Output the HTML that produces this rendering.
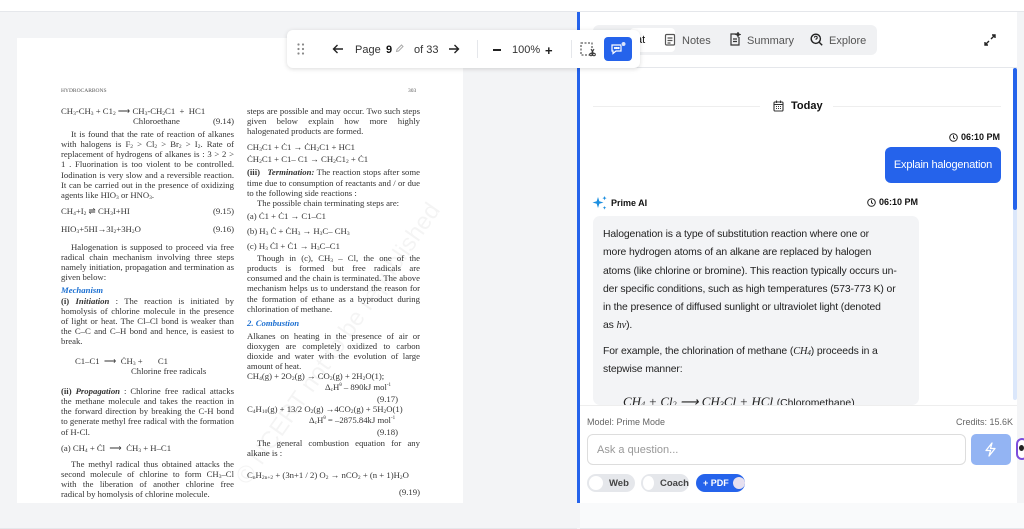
<!DOCTYPE html>
<html><head><meta charset="utf-8"><style>
*{box-sizing:border-box;margin:0;padding:0}
body{width:1024px;height:529px;overflow:hidden;background:#f3f4f6;font-family:"Liberation Sans",sans-serif;position:relative}
.abs{position:absolute}
.pdf{font-family:"Liberation Serif",serif;font-size:8.7px;line-height:10.1px;color:#333;text-align:justify}
.pdf p{margin:0}
.ind{text-indent:10px}
.eq{display:flex;justify-content:space-between}
.bl{color:#1b6fd1;font-weight:bold;font-style:italic}
sub{font-size:5.5px;vertical-align:-1px;line-height:0}
.chip{position:absolute;top:474px;height:18px;border-radius:9px;background:#e5e7eb;font-size:9.5px;color:#444;font-weight:bold;display:flex;align-items:center;white-space:nowrap}
.chip i{display:inline-block;width:14px;height:14px;border-radius:50%;background:#fff;margin:0 6px 0 2px}
</style></head><body>
<div class="abs" style="left:0;top:0;width:1024px;height:12px;background:#fff;border-bottom:1px solid #e5e7eb"></div>
<div class="abs" style="left:17px;top:38px;width:446px;height:465px;background:#fff"></div>
<div class="abs" style="left:0;top:503px;width:577px;height:26px;background:#f3f4f6;border-bottom:1px solid #e5e7eb"></div>
<div class="abs pdf" style="left:61px;top:86px;font-size:5.5px;color:#555">HYDROCARBONS</div>
<div class="abs pdf" style="left:408px;top:86px;font-size:5.5px;color:#555">303</div>
<div class="abs pdf" style="left:61px;top:106px;width:173px">
<div class="eq"><span>CH<sub>3</sub>-CH<sub>3</sub> + C1<sub>2</sub> ⟶ CH<sub>3</sub>-CH<sub>2</sub>C1 &nbsp;+ &nbsp;HC1</span></div>
<div class="eq"><span style="padding-left:72px">Chloroethane</span><span>(9.14)</span></div>
<p class="ind" style="margin-top:3px">It is found that the rate of reaction of alkanes with halogens is F<sub>2</sub> &gt; Cl<sub>2</sub> &gt; Br<sub>2</sub> &gt; I<sub>2</sub>. Rate of replacement of hydrogens of alkanes is : 3 &gt; 2 &gt; 1 . Fluorination is too violent to be controlled. Iodination is very slow and a reversible reaction. It can be carried out in the presence of oxidizing agents like HIO<sub>3</sub> or HNO<sub>3</sub>.</p>
<div class="eq" style="margin-top:6px"><span>CH<sub>4</sub>+I<sub>2</sub> ⇌ CH<sub>3</sub>I+HI</span><span>(9.15)</span></div>
<div class="eq" style="margin-top:8px"><span>HIO<sub>3</sub>+5HI→3I<sub>2</sub>+3H<sub>2</sub>O</span><span>(9.16)</span></div>
<p class="ind" style="margin-top:8px">Halogenation is supposed to proceed via free radical chain mechanism involving three steps namely initiation, propagation and termination as given below:</p>
<p class="bl" style="margin-top:3px">Mechanism</p>
<p><b>(i) <i>Initiation</i></b> : The reaction is initiated by homolysis of chlorine molecule in the presence of light or heat. The Cl–Cl bond is weaker than the C–C and C–H bond and hence, is easiest to break.</p>
<p style="margin-top:10px;padding-left:14px">C1–C1 &nbsp;⟶ &nbsp;ĊH<sub>3</sub> + &nbsp;&nbsp;&nbsp;&nbsp;&nbsp;&nbsp;C1</p>
<p style="padding-left:70px">Chlorine free radicals</p>
<p style="margin-top:10px"><b>(ii) <i>Propagation</i></b> : Chlorine free radical attacks the methane molecule and takes the reaction in the forward direction by breaking the C-H bond to generate methyl free radical with the formation of H-Cl.</p>
<p style="margin-top:6px">(a) CH<sub>4</sub> + Ċl &nbsp;⟶ &nbsp;ĊH<sub>3</sub> + H–C1</p>
<p class="ind" style="margin-top:6px">The methyl radical thus obtained attacks the second molecule of chlorine to form CH<sub>3</sub>–Cl with the liberation of another chlorine free radical by homolysis of chlorine molecule.</p>
</div>
<div class="abs pdf" style="left:247px;top:106px;width:173px">
<p>steps are possible and may occur. Two such steps given below explain how more highly halogenated products are formed.</p>
<p style="margin-top:6px">CH<sub>3</sub>C1 + Ċ1 → ĊH<sub>2</sub>C1 + HC1</p>
<p style="margin-top:2px">ĊH<sub>2</sub>C1 + C1– C1 → CH<sub>2</sub>C1<sub>2</sub> + Ċ1</p>
<p style="margin-top:3px"><b>(iii)</b> &nbsp;&nbsp;<b><i>Termination:</i></b> The reaction stops after some time due to consumption of reactants and / or due to the following side reactions :</p>
<p class="ind">The possible chain terminating steps are:</p>
<p style="margin-top:3px">(a) Ċ1 + Ċ1 → C1–C1</p>
<p style="margin-top:5px">(b) H<sub>3</sub> Ċ + ĊH<sub>3</sub> → H<sub>3</sub>C– CH<sub>3</sub></p>
<p style="margin-top:5px">(c) H<sub>3</sub> Ċl + Ċ1 → H<sub>3</sub>C–C1</p>
<p class="ind" style="margin-top:2px">Though in (c), CH<sub>3</sub> – Cl, the one of the products is formed but free radicals are consumed and the chain is terminated. The above mechanism helps us to understand the reason for the formation of ethane as a byproduct during chlorination of methane.</p>
<p class="bl" style="margin-top:4px">2. Combustion</p>
<p style="margin-top:3px">Alkanes on heating in the presence of air or dioxygen are completely oxidized to carbon dioxide and water with the evolution of large amount of heat.</p>
<p>CH<sub>4</sub>(g) + 2O<sub>2</sub>(g) → CO<sub>2</sub>(g) + 2H<sub>2</sub>O(1);</p>
<p style="padding-left:78px">Δ<sub>c</sub>H<sup style="font-size:5px">θ</sup> – 890kJ mol<sup style="font-size:5px">-1</sup></p>
<p style="text-align:right;padding-right:22px;margin-top:2px">(9.17)</p>
<p>C<sub>4</sub>H<sub>10</sub>(g) + 13/2 O<sub>2</sub>(g) →4CO<sub>2</sub>(g) + 5H<sub>2</sub>O(1)</p>
<p style="padding-left:62px">Δ<sub>c</sub>H<sup style="font-size:5px">θ</sup> = –2875.84kJ mol<sup style="font-size:5px">-1</sup></p>
<p style="text-align:right;padding-right:22px;margin-top:2px">(9.18)</p>
<p class="ind">The general combustion equation for any alkane is :</p>
<p style="margin-top:12px">C<sub>n</sub>H<sub>2n+2</sub> + (3n+1 / 2) O<sub>2</sub> → nCO<sub>2</sub> + (n + 1)H<sub>2</sub>O</p>
<p style="text-align:right;margin-top:7px">(9.19)</p>
</div>
<div class="abs" style="left:170px;top:330px;font:24px 'Liberation Sans',sans-serif;color:rgba(0,0,0,0.045);transform:rotate(-55deg);white-space:nowrap">© NCERT not to be republished</div>
<div class="abs" style="left:577px;top:12px;width:3px;height:491px;background:#2563eb"></div>
<div class="abs" style="left:580px;top:12px;width:437px;height:491px;background:#fff"></div>
<div class="abs" style="left:1017px;top:12px;width:7px;height:517px;background:#f3f4f6"></div>
<div class="abs" style="left:580px;top:503px;width:444px;height:26px;background:#f9fafb;border-bottom:1px solid #e5e7eb"></div>
<div class="abs" style="left:593px;top:25px;width:284px;height:30px;background:#f0f1f3;border-radius:6px"></div>
<div class="abs" style="left:630px;top:28px;width:45px;height:24px;background:#fff;border-radius:4px"></div>
<div class="abs" style="left:636px;top:34px;font-size:11px;color:#111">at</div>
<svg class="abs" style="left:664px;top:33px" width="12" height="13" viewBox="0 0 12 13" fill="none" stroke="#555" stroke-width="1.2"><rect x="1.5" y="1.5" width="9" height="10.5" rx="1"/><path d="M3.5 5h5M3.5 7.5h5M3.5 10h3"/></svg>
<div class="abs" style="left:682px;top:35px;font-size:11px;color:#555">Notes</div>
<svg class="abs" style="left:729px;top:32px" width="12" height="14" viewBox="0 0 12 14" fill="none" stroke="#333" stroke-width="1.2"><path d="M8 2H2v11h8V5"/><path d="M4 7h4M4 9.5h4"/><path d="M9 0.5l.6 1.4 1.4.6-1.4.6L9 4.5l-.6-1.4-1.4-.6 1.4-.6z" fill="#333"/></svg>
<div class="abs" style="left:747px;top:35px;font-size:11px;color:#555">Summary</div>
<svg class="abs" style="left:810px;top:33px" width="13" height="13" viewBox="0 0 13 13" fill="none" stroke="#222" stroke-width="1.4"><circle cx="5.8" cy="5.8" r="4.6"/><path d="M9.2 9.2l3 3"/><path d="M4.4 4.6a1.4 1.4 0 1 1 1.6 1.4v.8" stroke-width="1"/></svg>
<div class="abs" style="left:829px;top:35px;font-size:11px;color:#555">Explore</div>
<svg class="abs" style="left:984px;top:34px" width="12" height="12" viewBox="0 0 12 12" fill="none" stroke="#222" stroke-width="1.4"><path d="M7 5l4-4M8 1h3v3M5 7l-4 4M1 8v3h3"/></svg>
<div class="abs" style="left:580px;top:67px;width:437px;height:1px;background:#e5e7eb"></div>
<div class="abs" style="left:1013px;top:68px;width:4px;height:332px;background:#dbe7fb;border-radius:2px"></div>
<div class="abs" style="left:1013px;top:68px;width:4px;height:142px;background:#2563eb;border-radius:2px"></div>
<div class="abs" style="left:593px;top:106px;width:167px;height:1px;background:#eee"></div>
<div class="abs" style="left:833px;top:106px;width:168px;height:1px;background:#eee"></div>
<svg class="abs" style="left:773px;top:100px" width="11" height="12" viewBox="0 0 11 12" fill="none" stroke="#333" stroke-width="1.1"><rect x="1" y="2" width="9" height="9" rx="1"/><path d="M1 4.5h9M3.5 0.5v2.5M7.5 0.5v2.5"/><path d="M3 6.5h1M5 6.5h1M7 6.5h1M3 8.5h1M5 8.5h1M7 8.5h1"/></svg>
<div class="abs" style="left:791px;top:100px;font-size:11px;font-weight:bold;color:#111">Today</div>
<svg class="abs" style="left:949px;top:133px" width="9" height="9" viewBox="0 0 9 9" fill="none" stroke="#222" stroke-width="1"><circle cx="4.5" cy="4.5" r="3.8"/><path d="M4.5 2.3v2.4l1.5 1"/></svg>
<div class="abs" style="left:961px;top:132px;font-size:9px;font-weight:bold;color:#111">06:10 PM</div>
<div class="abs" style="left:885px;top:147px;width:116px;height:36px;background:#2563eb;border-radius:6px;color:#fff;font-size:11px;letter-spacing:-0.2px;display:flex;align-items:center;justify-content:center">Explain halogenation</div>
<svg class="abs" style="left:592px;top:195px" width="16" height="16" viewBox="0 0 16 16" fill="#1d8fe0"><path d="M6 2l1.3 4.2L11.5 7.5 7.3 8.8 6 13 4.7 8.8.5 7.5l4.2-1.3z"/><path d="M12.5 1l.6 1.5 1.5.6-1.5.6-.6 1.5-.6-1.5-1.5-.6 1.5-.6zM12.5 11l.5 1.3 1.3.5-1.3.5-.5 1.3-.5-1.3-1.3-.5 1.3-.5z"/></svg>
<div class="abs" style="left:611px;top:198px;font-size:9px;font-weight:bold;color:#111">Prime AI</div>
<svg class="abs" style="left:867px;top:198px" width="9" height="9" viewBox="0 0 9 9" fill="none" stroke="#222" stroke-width="1"><circle cx="4.5" cy="4.5" r="3.8"/><path d="M4.5 2.3v2.4l1.5 1"/></svg>
<div class="abs" style="left:879px;top:197px;font-size:9px;font-weight:bold;color:#111">06:10 PM</div>
<div class="abs" style="left:593px;top:216px;width:326px;height:189px;background:#f3f4f6;border-radius:7px;overflow:hidden">
<div style="padding:10px 8px 0 10px;font-size:10.4px;line-height:18.3px;color:#222;letter-spacing:-0.12px;white-space:nowrap">
Halogenation is a type of substitution reaction where one or<br>more hydrogen atoms of an alkane are replaced by halogen<br>atoms (like chlorine or bromine). This reaction typically occurs un-<br>der specific conditions, such as high temperatures (573-773 K) or<br>in the presence of diffused sunlight or ultraviolet light (denoted<br>as <i style="font-family:'Liberation Serif',serif">hν</i>).
<div style="margin-top:7px">For example, the chlorination of methane (<i style="font-family:'Liberation Serif',serif">CH<sub style="font-size:7px">4</sub></i>) proceeds in a<br>stepwise manner:</div>
<div style="margin-top:14px;padding-left:20px;font-size:13px;letter-spacing:0"><i style="font-family:'Liberation Serif',serif">CH<sub style="font-size:8px">4</sub> + Cl<sub style="font-size:8px">2</sub> ⟶ CH<sub style="font-size:8px">3</sub>Cl + HCl</i> <span style="font-size:10.4px">(Chloromethane)</span></div>
</div></div>
<div class="abs" style="left:580px;top:405px;width:437px;height:1px;background:#eee"></div>
<div class="abs" style="left:587px;top:417px;font-size:9px;color:#666">Model: Prime Mode</div>
<div class="abs" style="left:956px;top:417px;font-size:9px;color:#666">Credits: 15.6K</div>
<div class="abs" style="left:587px;top:434px;width:379px;height:31px;border:1px solid #ddd;border-radius:6px;background:#fff;font-size:11px;color:#999;padding:9px 9px">Ask a question...</div>
<div class="abs" style="left:971px;top:434px;width:40px;height:31px;background:#93b4f3;border-radius:5px"></div>
<svg class="abs" style="left:983px;top:442px" width="15" height="15" viewBox="0 0 15 15" fill="none" stroke="#fff" stroke-width="1.3" stroke-linejoin="round"><path d="M9 1L3 8.5h4.5L6 14l6-7.5H7.5z"/></svg>
<div class="chip" style="left:587px;width:48px"><i></i>Web</div>
<div class="chip" style="left:641px;width:48px"><i></i>Coach</div>
<div class="chip" style="left:696px;width:49px;background:#2563eb;color:#fff;padding-left:7px;font-size:9px">+ PDF<i style="margin:0 0 0 4px;background:#e6e0f0;width:12px;height:12px"></i></div>
<div class="abs" style="left:1016px;top:438px;width:12px;height:22px;border-radius:11px;border:2px solid #7c4ddb;background:#fff"></div>
<div class="abs" style="left:1019px;top:445px;width:5px;height:6px;border-radius:50%;background:#222"></div>
<div class="abs" style="left:287px;top:30px;width:353px;height:38px;background:#fff;border-radius:6px;box-shadow:0 1px 5px rgba(0,0,0,0.15)"></div>
<svg class="abs" style="left:297px;top:43px" width="8" height="12" viewBox="0 0 8 12" fill="#888"><circle cx="1.5" cy="1.5" r="1.1"/><circle cx="6" cy="1.5" r="1.1"/><circle cx="1.5" cy="6" r="1.1"/><circle cx="6" cy="6" r="1.1"/><circle cx="1.5" cy="10.5" r="1.1"/><circle cx="6" cy="10.5" r="1.1"/></svg>
<svg class="abs" style="left:332px;top:43px" width="12" height="12" viewBox="0 0 12 12" fill="none" stroke="#222" stroke-width="1.4"><path d="M11 6H1.5M5.5 2L1.5 6l4 4"/></svg>
<div class="abs" style="left:355px;top:44px;font-size:11px;color:#333">Page</div>
<div class="abs" style="left:386px;top:44px;font-size:11px;font-weight:bold;color:#111">9</div>
<svg class="abs" style="left:395px;top:43px" width="9" height="10" viewBox="0 0 9 10" fill="none" stroke="#aaa" stroke-width="1"><path d="M1.5 8.5l.5-2L6.5 2l1.5 1.5-4.5 4.5z"/></svg>
<div class="abs" style="left:414px;top:44px;font-size:11px;color:#333">of 33</div>
<svg class="abs" style="left:448px;top:43px" width="12" height="12" viewBox="0 0 12 12" fill="none" stroke="#222" stroke-width="1.4"><path d="M1 6h9.5M6.5 2l4 4-4 4"/></svg>
<div class="abs" style="left:477px;top:40px;width:1px;height:18px;background:#e5e7eb"></div>
<div class="abs" style="left:493px;top:49px;width:8px;height:2px;background:#222"></div>
<div class="abs" style="left:512px;top:44px;font-size:11px;color:#333">100%</div>
<div class="abs" style="left:545px;top:43px;font-size:13px;color:#222;font-weight:bold">+</div>
<div class="abs" style="left:571px;top:40px;width:1px;height:18px;background:#e5e7eb"></div>
<svg class="abs" style="left:580px;top:42px" width="16" height="15" viewBox="0 0 16 15" fill="none" stroke="#333" stroke-width="1"><rect x="1" y="1" width="11" height="12" stroke-dasharray="2 1.5"/><circle cx="11" cy="12.5" r="1.3"/><circle cx="14" cy="12.5" r="1.3"/><path d="M11.5 11.5L14 7M13.5 11.5L11 7"/></svg>
<div class="abs" style="left:604px;top:37px;width:28px;height:24px;background:#2563eb;border-radius:4px"></div>
<svg class="abs" style="left:610px;top:41px" width="17" height="15" viewBox="0 0 17 15" fill="none" stroke="#fff" stroke-width="1.2"><path d="M2 4h9v6H6l-3 2.5V10H2z"/><circle cx="5" cy="7" r=".5" fill="#fff"/><circle cx="6.8" cy="7" r=".5" fill="#fff"/><circle cx="8.6" cy="7" r=".5" fill="#fff"/><circle cx="13.5" cy="3" r="2.3" fill="#dbe4fb" stroke="#2563eb" stroke-width=".6"/></svg>
</body></html>
